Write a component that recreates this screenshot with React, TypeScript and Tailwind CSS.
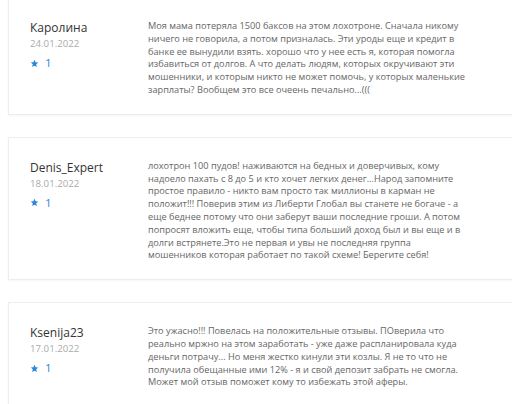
import React from "react";

interface Review {
  id: number;
  name: string;
  date: string;
  rating: number;
  text: string;
}

const reviews: Review[] = [
  {
    id: 1,
    name: "Каролина",
    date: "24.01.2022",
    rating: 1,
    text: "Моя мама потеряла 1500 баксов на этом лохотроне. Сначала никому ничего не говорила, а потом призналась. Эти уроды еще и кредит в банке ее вынудили взять. хорошо что у нее есть я, которая помогла избавиться от долгов. А что делать людям, которых окручивают эти мошенники, и которым никто не может помочь, у которых маленькие зарплаты? Вообщем это все очеень печально...(((",
  },
  {
    id: 2,
    name: "Denis_Expert",
    date: "18.01.2022",
    rating: 1,
    text: "лохотрон 100 пудов! наживаются на бедных и доверчивых, кому надоело пахать с 8 до 5 и кто хочет легких денег...Народ запомните простое правило - никто вам просто так миллионы в карман не положит!!! Поверив этим из Либерти Глобал вы станете не богаче - а еще беднее потому что они заберут ваши последние гроши. А потом попросят вложить еще, чтобы типа больший доход был и вы еще и в долги встрянете.Это не первая и увы не последняя группа мошенников которая работает по такой схеме! Берегите себя!",
  },
  {
    id: 3,
    name: "Ksenija23",
    date: "17.01.2022",
    rating: 1,
    text: "Это ужасно!!! Повелась на положительные отзывы. ПОверила что реально мржно на этом заработать - уже даже распланировала куда деньги потрачу... Но меня жестко кинули эти козлы. Я не то что не получила обещанные ими 12% - я и свой депозит забрать не смогла. Может мой отзыв поможет кому то избежать этой аферы.",
  },
];

function Star() {
  return (
    <svg viewBox="0 0 24 24" className="w-[9px] h-[9px]" fill="#2b88d8">
      <path d="M12 2l2.9 6.9 7.1.6-5.4 4.7 1.6 7.3L12 17.7 5.8 21.5l1.6-7.3L2 9.5l7.1-.6z" />
    </svg>
  );
}

export default function App() {
  return (
    <div
      className="w-[512px] h-[404px] overflow-hidden bg-white"
      style={{ fontFamily: '"Open Sans", sans-serif' }}
    >
      <div className="flex flex-col gap-[22px] pl-2 -mt-[3px]">
        {reviews.map((r) => (
          <div
            key={r.id}
            className="flex -mr-2 bg-white border border-[#ededed] shadow-[0_1px_2px_rgba(0,0,0,0.04)] pt-[22px] pb-[17px] pl-[21px]"
          >
            <div className="w-[118px] shrink-0">
              <h3 className="text-[12px] leading-[16px] text-[#333]">{r.name}</h3>
              <p className="text-[9.7px] leading-[16px] text-[#aaa]">{r.date}</p>
              <div className="flex items-center gap-[6px] mt-[3px] text-[11.5px] leading-[16px] text-[#2b88d8]">
                <Star />
                <span>{r.rating}</span>
              </div>
            </div>
            <p className="w-[321px] text-[9.2px] leading-[12.8px] text-[#666]">{r.text}</p>
          </div>
        ))}
      </div>
    </div>
  );
}
